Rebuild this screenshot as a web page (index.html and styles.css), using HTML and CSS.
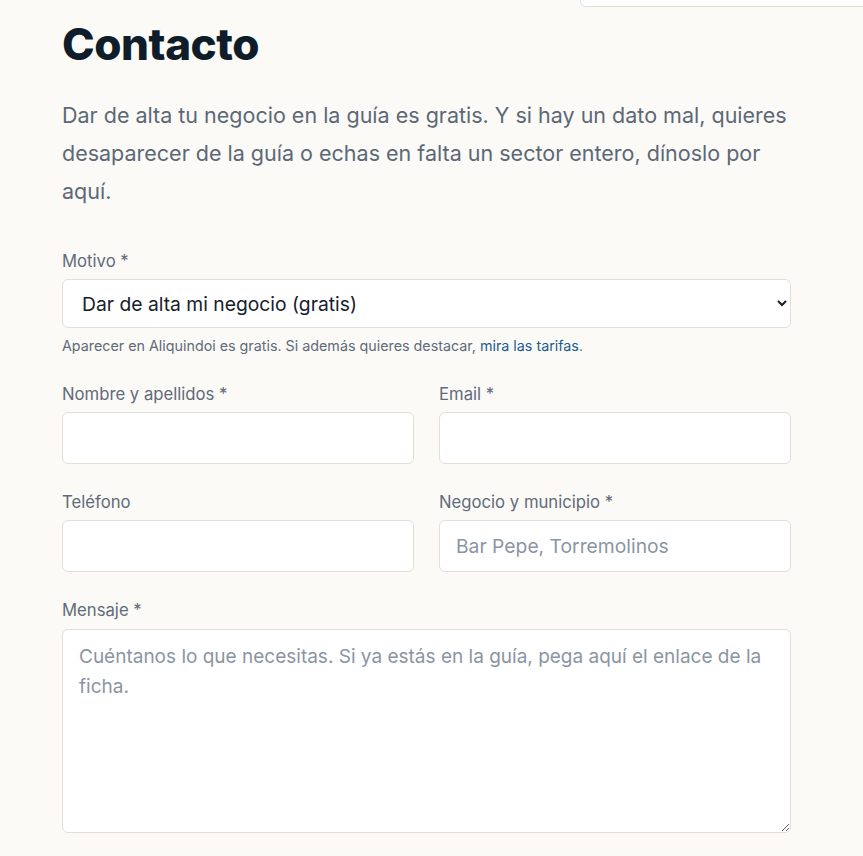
FILE: index.html
```html
<!DOCTYPE html>
<html lang="es">
<head>
<meta charset="utf-8">
<title>Contacto</title>
<link rel="stylesheet" href="styles.css">
</head>
<body>
<div class="topbox"></div>
<main class="page">
  <h1 class="title">Contacto</h1>
  <p class="intro">Dar de alta tu negocio en la guía es gratis. Y si hay un dato mal, quieres desaparecer de la guía o echas en falta un sector entero, dínoslo por aquí.</p>
  <form class="form">
    <div class="field">
      <label class="label" for="motivo">Motivo *</label>
      <select class="control select" id="motivo">
        <option>Dar de alta mi negocio (gratis)</option>
        <option>Corregir un dato</option>
        <option>Eliminar mi negocio</option>
        <option>Sugerir un sector</option>
      </select>
      <p class="help">Aparecer en Aliquindoi es gratis. Si además quieres destacar, <a class="link" href="#">mira las tarifas</a>.</p>
    </div>
    <div class="row">
      <div class="field">
        <label class="label" for="nombre">Nombre y apellidos *</label>
        <input class="control input" id="nombre" type="text">
      </div>
      <div class="field">
        <label class="label" for="email">Email *</label>
        <input class="control input" id="email" type="email">
      </div>
    </div>
    <div class="row">
      <div class="field">
        <label class="label" for="tel">Teléfono</label>
        <input class="control input" id="tel" type="tel">
      </div>
      <div class="field">
        <label class="label" for="negocio">Negocio y municipio *</label>
        <input class="control input" id="negocio" type="text" placeholder="Bar Pepe, Torremolinos">
      </div>
    </div>
    <div class="field">
      <label class="label" for="mensaje">Mensaje *</label>
      <textarea class="control textarea" id="mensaje" placeholder="Cuéntanos lo que necesitas. Si ya estás en la guía, pega aquí el enlace de la ficha."></textarea>
    </div>
  </form>
</main>
</body>
</html>
```
FILE: styles.css
```css
* { box-sizing: border-box; }
html, body {
  margin: 0;
  background: #fbfaf6;
  font-family: Inter, "Noto Sans", "Liberation Sans", sans-serif;
  color: #5c6876;
}
.topbox {
  position: fixed;
  top: -40px;
  left: 580px;
  width: 320px;
  height: 47px;
  background: #fff;
  border: 1px solid #e2ded6;
  border-radius: 6px;
}
.page {
  width: 729px;
  margin-left: 62px;
  padding-top: 20px;
}
.title {
  margin: 0;
  font-size: 44px;
  line-height: 48px;
  font-weight: 800;
  letter-spacing: -0.01em;
  color: #0f1d2b;
}
.intro {
  margin: 28px 0 0;
  font-size: 21.5px;
  line-height: 38px;
  color: #5c6876;
}
.form {
  margin-top: 39px;
  display: flex;
  flex-direction: column;
  gap: 26px;
}
.row {
  display: grid;
  grid-template-columns: 1fr 1fr;
  gap: 25px;
}
.field {
  display: flex;
  flex-direction: column;
}
.label {
  font-size: 16.7px;
  line-height: 24px;
  color: #5f6b7a;
  margin-bottom: 6px;
}
.control {
  width: 100%;
  background: #fff;
  border: 1px solid #e3dfd6;
  border-radius: 6px;
  font-family: inherit;
  font-size: 19.3px;
  color: #16202b;
  outline: none;
}
.control::placeholder { color: #8a95a3; }
.select {
  height: 49px;
  padding: 0 12px 0 15px;
}
.input {
  height: 52px;
  padding: 0 16px;
}
.textarea {
  height: 204px;
  padding: 12px 16px;
  font-size: 19px;
  line-height: 30px;
  resize: vertical;
  margin-top: 1px;
}
.help {
  margin: 8px 0 0;
  font-size: 14.3px;
  line-height: 20px;
  color: #5f6b7a;
}
.link {
  color: #1d5b91;
  text-decoration: none;
}
```
